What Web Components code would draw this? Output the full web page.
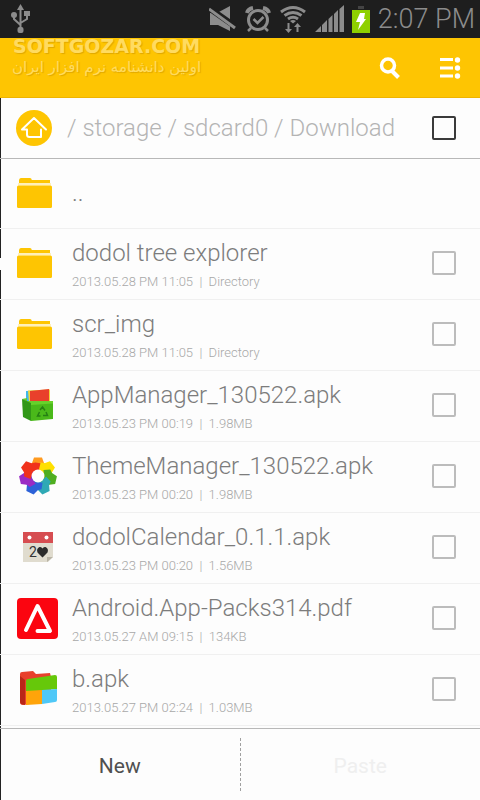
<!DOCTYPE html>
<html lang="en">
<head>
<meta charset="utf-8">
<meta name="viewport" content="width=device-width, initial-scale=1">
<title>File explorer</title>
<style>
  body { margin: 0; font-family: Roboto, "Noto Sans", sans-serif; background: #fdfdfd; }
</style>
</head>
<body>
<file-explorer></file-explorer>
<script>
const gear = (() => {
  const colors = ['#ff9a1f', '#ffe000', '#4fae20', '#2fa9b5', '#2d62d8', '#9a2bc4', '#f0321c'];
  return colors.map((c, i) =>
    `<path fill="${c}" transform="rotate(${i * 360 / 7} 19 19)" d="M10 8.500 L13 6 L15 0.500 H23 L25 6 L28 8.500 L30.500 13 L24 16 L19 12.400 L12 15 Z"/>`
  ).join('') + '<circle cx="19" cy="19" r="6.400" fill="#fff"/>';
})();

const folder = '<g transform="translate(1)"><path fill="#fec502" d="M4 0h9q1.500 0 1.800 2H33v3H2V2q.5-2 2-2z"/><path fill="#fff0b8" d="M1 5h33v2.500H1z"/><rect y="7.500" width="35" height="22.500" rx="1.500" fill="#fec502"/></g>';

const ICONS = {
  usb: [19, 30, '<g fill="none" stroke="#8c8c8c" stroke-width="2"><path d="M9.500 5v20M3 11v4l6.500 6M16 10v5l-6.500 4"/></g><g fill="#8c8c8c"><path d="M9.500 0l3.500 6H6z"/><circle cx="3" cy="11" r="3"/><path d="M13 7h6v5h-6z"/><rect x="6.500" y="23" width="6" height="6" rx="2"/></g>'],
  mute: [28, 26, '<path fill="#8c8c8c" d="M1 7h7l13-7v25L9 19H1z"/><path stroke="#1e1e1e" stroke-width="6" d="M0 2l27 19"/><path stroke="#8c8c8c" stroke-width="3" d="M0 3l26 19"/>'],
  alarm: [26, 26, '<g fill="none" stroke="#8c8c8c"><circle cx="13" cy="14" r="9.500" stroke-width="3"/><path stroke-width="2.500" d="M8.500 13l4 4 6-6M6 22l-3 3M20 22l3 3"/><path stroke-width="4" d="M2 7q1-4 6-5M24 7q-1-4-6-5"/></g>'],
  wifi: [28, 28, '<g fill="none" stroke="#8c8c8c" stroke-width="3"><path d="M2 7q12-9 24 0M5.500 10.500q8.500-6 17 0M9 14q5-3.500 10 0"/></g><path fill="#8c8c8c" d="M11 16q3-2 6 0l-3 2.500zM8.500 18h2v6H13l-3.500 4L6 24h2.500zM17.500 27h2v-5H22l-3.500-4-3.500 4h2.500z"/>'],
  signal: [29, 28, '<path fill="#8c8c8c" d="M0 27l6-6v6zM7 20l5-5v12H7zM13.500 14l4-4v17h-4zM19 9l4-4v22h-4zM24.500 4L29 0v27h-4.500z"/>'],
  battery: [18, 27, '<path fill="#444" d="M6 0h6v3H6z"/><path fill="#8ed000" d="M0 4h18v23H0z"/><path fill="#fff" d="M8 7h5l-1 6h2l-8 11 2-8H4z"/>'],
  search: [22, 22, '<g fill="none" stroke="#fff"><circle cx="9" cy="8.500" r="6.500" stroke-width="3.500"/><path stroke-width="4" d="M13 14l6.500 6.500"/></g>'],
  menu: [21, 22, '<g fill="#fff"><path d="M0 1h13v3H0zM0 9.500h13v3H0zM0 17.500h13v3H0z"/><circle cx="17.500" cy="3" r="2.700"/><circle cx="17.500" cy="11" r="2.700"/><circle cx="17.500" cy="19" r="2.700"/></g>'],
  home: [36, 36, '<circle cx="18" cy="18" r="18" fill="#fec502"/><path fill="none" stroke="#fff" stroke-width="2" stroke-linecap="round" stroke-linejoin="round" d="M25 26.500v-7M30 19.500L18 8 6 19.500h5v5q0 2.500 2.500 2.500H25v-2"/>'],
  folder: [36, 30, folder],
  bin: [32, 35, '<path fill="#42b8ea" d="M4 3l22-1v12H4z"/><path fill="#f4d33b" d="M6 2.500l22-1V14H7z"/><path fill="#e9402b" d="M8 3l19-2v13H8z"/><path fill="#69cc30" d="M0 11l5-1v3h26v3L9 17z"/><path fill="#319718" d="M0 11l9 4v18l-8-4z"/><path fill="#4ab91a" d="M9 15l22-1v17L9 33z"/><path fill="#67d22b" d="M9 14.500L31 13v2.500L9 17z"/><path fill="none" stroke="#267f14" stroke-width="1.500" d="M18 22l2.500-3 2.500 3.500M24 24l1.500 3.500H21M18.500 28h-3l2-4"/>'],
  gear: [38, 38, gear],
  calendar: [30, 30, '<path fill="#e0dccf" d="M0 9h30v16l-5 5H0z"/><path fill="#b9b4a6" d="M30 25h-6v5z"/><path fill="#d64d51" d="M0 0h30v11H0z"/><circle cx="6.500" cy="5.500" r="2" fill="#fff"/><circle cx="23.500" cy="5.500" r="2" fill="#fff"/><text x="6" y="25" font-family="Roboto, sans-serif" font-size="14" fill="#333">2</text><path fill="#2b2b2b" d="M19.500 25.500l-5-5q-1.500-4 2-5.500 2-.5 3 1.500 1-2 3-1.500 3.500 1.500 2 5.500z"/>'],
  red: [41, 41, '<rect width="41" height="41" rx="4" fill="#fb0510"/><path fill="none" stroke="#fff" stroke-width="4" stroke-linecap="round" stroke-linejoin="round" d="M9 32L20.500 8 33 33H20.500"/>'],
  blocks: [38, 36, '<path fill="#e8402c" d="M1 3q0-2 2-2l11-1 3 3 14-1 1 4v24L4 34q-3 0-3-3z"/><path fill="#b92718" d="M1 5l5 4v25l-4-1q-1-1-1-3z"/><path fill="#66c80a" d="M7 10q0-2 2-2l27-4q2 0 2 2v12L7 21z"/><path fill="#ffa40a" d="M7 20l16-1v14L7 34z"/><path fill="#4fc8f7" d="M23 19l15-1v11q0 2-2 2l-13 2z"/>']
};

const define = (tag, markup, setup) => {
  const template = document.createElement('template');
  template.innerHTML = markup;
  customElements.define(tag, class extends HTMLElement {
    constructor() {
      super();
      this.attachShadow({ mode: 'open' }).append(template.content.cloneNode(true));
    }
    connectedCallback() { if (setup) setup(this, this.shadowRoot); }
  });
};

define('ui-icon', '<style>:host{display:inline-flex;flex:none}svg{display:block}</style><span></span>', (el, root) => {
  const [w, h, body] = ICONS[el.getAttribute('name')];
  root.querySelector('span').innerHTML = `<svg aria-hidden="true" width="${w}" height="${h}" viewBox="0 0 ${w} ${h}">${body}</svg>`;
});

define('status-bar', `<style>
  :host{display:flex;align-items:center;height:38px;padding:0 5px 0 11px;box-sizing:border-box;background:#1e1e1e;color:#8c8c8c}
  .right{display:flex;align-items:center;gap:8px;margin-left:auto}
  time{font-size:27px;line-height:38px;font-weight:300;white-space:nowrap}
</style>
<ui-icon name="usb"></ui-icon>
<div class="right"><ui-icon name="mute"></ui-icon><ui-icon name="alarm"></ui-icon><ui-icon name="wifi"></ui-icon><ui-icon name="signal"></ui-icon><ui-icon name="battery"></ui-icon><time>2:07 PM</time></div>`);

define('app-bar', `<style>
  :host{display:flex;height:60px;box-sizing:border-box;padding:0 0 0 12px;background:#fec502;border-bottom:1px solid #efb400;justify-content:space-between}
  .brand{display:flex;flex-direction:column;align-items:center;color:#ffdb60;text-shadow:1px 1px 1px #e0a800}
  .name{font:bold 19px/17px "DejaVu Sans",sans-serif}
  .tag{font:15px/24px "DejaVu Sans",sans-serif}
  nav{display:flex}
  button{width:60px;padding:0;border:0;background:none;display:flex;align-items:center;justify-content:center}
</style>
<div class="brand"><span class="name">SOFTGOZAR.COM</span><span class="tag" lang="fa" dir="rtl">اولین دانشنامه نرم افزار ایران</span></div>
<nav><button type="button" aria-label="Search"><ui-icon name="search"></ui-icon></button><button type="button" aria-label="Menu"><ui-icon name="menu"></ui-icon></button></nav>`);

const checkStyle = 'input{appearance:none;flex:none;width:24px;height:24px;margin:0;border:2px solid #bcbcbc;border-radius:2px;box-sizing:border-box}';

define('path-bar', `<style>
  :host{display:flex;align-items:center;height:61px;box-sizing:border-box;padding:0 24px 0 16px;border-bottom:1px solid #b8b8b8}
  ${checkStyle}
  input{border-color:#3a3a3a}
  button{border:0;background:none;padding:0;display:flex}
  nav{flex:1;padding-left:15px;font-size:24px;line-height:32px;font-weight:300;color:#b4b4b4;white-space:pre}
  a{color:inherit;text-decoration:none}
</style>
<button type="button" aria-label="Home"><ui-icon name="home"></ui-icon></button>
<nav aria-label="Path">/ <a href="#storage">storage</a> / <a href="#sdcard0">sdcard0</a> / <a href="#download">Download</a></nav>
<input type="checkbox" aria-label="Select all">`);

define('file-row', `<style>
  :host{display:flex;align-items:center;height:71px;box-sizing:border-box;padding:0 24px 2px 16px;border-bottom:1px solid #f0f0f0}
  :host([up]){height:70px}
  ${checkStyle}
  .icon{width:43px;display:flex;justify-content:center;flex:none}
  .icon.start{justify-content:flex-start}
  .text{flex:1;min-width:0;padding:1px 0 0 13px}
  label{display:block;font-size:24px;line-height:32px;color:#7c7c7c;font-weight:300}
  .meta{display:block;font-size:13px;line-height:16px;padding-top:5px;color:#a8a8a8;font-weight:300;white-space:pre}
  .meta:empty{display:none}
</style>
<span class="icon"></span>
<span class="text"><label for="pick"><slot></slot></label><span class="meta"></span></span>
<input id="pick" type="checkbox">`, (el, root) => {
  const icon = document.createElement('ui-icon');
  icon.setAttribute('name', el.getAttribute('icon'));
  const box = root.querySelector('.icon');
  box.replaceChildren(icon);
  box.classList.toggle('start', el.getAttribute('icon') === 'folder');
  root.querySelector('.meta').textContent = el.getAttribute('meta') || '';
  root.querySelector('input').setAttribute('aria-label', el.textContent);
  if (el.hasAttribute('up')) root.querySelector('input').remove();
});

define('action-bar', `<style>
  :host{display:flex;height:72px;box-sizing:border-box;border-top:1px solid #b8b8b8;padding:9px 0}
  button{flex:1;border:0;background:none;padding:2px 0 0;font:21px/32px Roboto,sans-serif;color:#505050}
  button:disabled{color:#efefef}
  button + button{border-left:1px dashed #a0a0a0}
</style>
<button type="button">New</button><button type="button" disabled>Paste</button>`);

define('file-explorer', `<style>
  :host{display:flex;flex-direction:column;height:100vh}
  main{flex:1;min-height:0;display:flex;flex-direction:column;background:linear-gradient(#222 160px,#fdfdfd 160px 172px,#222 172px) left / 1px 100% no-repeat}
  .list{flex:1;min-height:0;overflow:hidden}
</style>
<status-bar></status-bar>
<app-bar></app-bar>
<main>
  <path-bar></path-bar>
  <div class="list">
    <file-row icon="folder" up>..</file-row>
    <file-row icon="folder" meta="2013.05.28 PM 11:05  |  Directory">dodol tree explorer</file-row>
    <file-row icon="folder" meta="2013.05.28 PM 11:05  |  Directory">scr_img</file-row>
    <file-row icon="bin" meta="2013.05.23 PM 00:19  |  1.98MB">AppManager_130522.apk</file-row>
    <file-row icon="gear" meta="2013.05.23 PM 00:20  |  1.98MB">ThemeManager_130522.apk</file-row>
    <file-row icon="calendar" meta="2013.05.23 PM 00:20  |  1.56MB">dodolCalendar_0.1.1.apk</file-row>
    <file-row icon="red" meta="2013.05.27 AM 09:15  |  134KB">Android.App-Packs314.pdf</file-row>
    <file-row icon="blocks" meta="2013.05.27 PM 02:24  |  1.03MB">b.apk</file-row>
  </div>
  <action-bar></action-bar>
</main>`);
</script>
</body>
</html>
